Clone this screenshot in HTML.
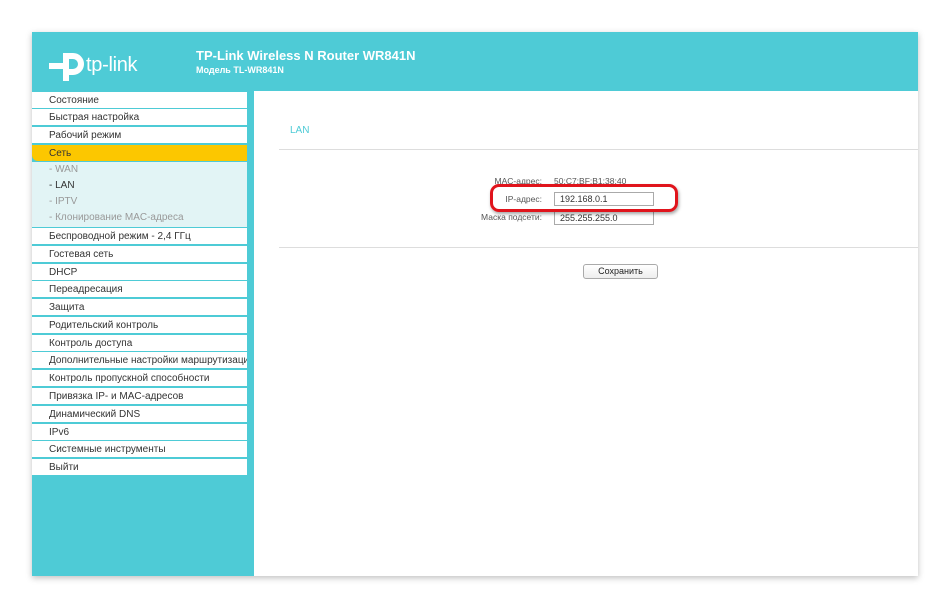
<!DOCTYPE html><html><head><meta charset="utf-8"><style>
*{margin:0;padding:0;box-sizing:border-box}
body{width:950px;height:608px;background:#fff;position:relative;overflow:hidden;font-family:"Liberation Sans",Arial,sans-serif}
#f{position:absolute;left:32px;top:32px;width:886px;height:544px;background:#4ecbd6;box-shadow:0 2px 6px rgba(0,0,0,.25)}
.h1{position:absolute;left:196px;top:48px;color:#fff;font-weight:bold;font-size:13px}
.h2{position:absolute;left:196px;top:65px;color:#fff;font-weight:bold;font-size:9px}
.logo{position:absolute;left:86px;top:54px;color:#fff;font-size:20px;letter-spacing:-0.3px}
.it{position:absolute;left:32px;width:215px;height:16px;background:#fff;font-size:10px;color:#333;padding-left:17px;line-height:18px}
.sub{position:absolute;left:32px;top:162px;width:215px;height:65px;background:#e2f4f5}
.sub div{position:absolute;left:17px;font-size:10px;color:#999}
#m{position:absolute;left:254px;top:91px;width:664px;height:485px;background:#fff}
.lbl{position:absolute;font-size:8.5px;color:#555;text-align:right;width:120px}
.inp{position:absolute;left:554px;width:100px;height:14px;border:1px solid #aaa;font-size:9px;padding-left:5px;line-height:12px;color:#333}
</style></head><body>
<div id="f"></div>
<svg style="position:absolute;left:49px;top:50px" width="36" height="32" viewBox="0 0 36 32"><rect x="0" y="13" width="16" height="6" fill="#fff"/><rect x="14" y="3" width="6" height="28" fill="#fff"/><path d="M17 6h7a8 8 0 0 1 0 16h-4" fill="none" stroke="#fff" stroke-width="6"/></svg>
<div class="logo">tp-link</div>
<div class="h1">TP-Link Wireless N Router WR841N</div>
<div class="h2">Модель TL-WR841N</div>
<div class="it" style="top:92px">Состояние</div>
<div class="it" style="top:109px">Быстрая настройка</div>
<div class="it" style="top:127px">Рабочий режим</div>
<div class="it" style="top:145px;background:#fcc700;border-radius:0 0 0 6px">Сеть</div>
<div class="sub"><div style="top:2px">- WAN</div><div style="top:18px;color:#333">- LAN</div><div style="top:34px">- IPTV</div><div style="top:50px">- Клонирование MAC-адреса</div></div>
<div class="it" style="top:228px">Беспроводной режим - 2,4 ГГц</div>
<div class="it" style="top:246px">Гостевая сеть</div>
<div class="it" style="top:264px">DHCP</div>
<div class="it" style="top:281px">Переадресация</div>
<div class="it" style="top:299px">Защита</div>
<div class="it" style="top:317px">Родительский контроль</div>
<div class="it" style="top:335px">Контроль доступа</div>
<div class="it" style="top:352px;white-space:nowrap;overflow:hidden">Дополнительные настройки маршрутизации</div>
<div class="it" style="top:370px">Контроль пропускной способности</div>
<div class="it" style="top:388px">Привязка IP- и MAC-адресов</div>
<div class="it" style="top:406px">Динамический DNS</div>
<div class="it" style="top:424px">IPv6</div>
<div class="it" style="top:441px">Системные инструменты</div>
<div class="it" style="top:459px">Выйти</div>
<div id="m"></div>
<div style="position:absolute;left:290px;top:125px;color:#4ecbd6;font-size:10px">LAN</div>
<div style="position:absolute;left:279px;top:149px;width:639px;height:1px;background:#ddd"></div>
<div class="lbl" style="left:422px;top:176px">MAC-адрес:</div>
<div style="position:absolute;left:554px;top:176px;font-size:8.5px;color:#555">50:C7:BF:B1:38:40</div>
<div class="lbl" style="left:422px;top:194px">IP-адрес:</div>
<div class="inp" style="top:192px">192.168.0.1</div>
<div class="lbl" style="left:422px;top:212px">Маска подсети:</div>
<div class="inp" style="top:211px">255.255.255.0</div>
<div style="position:absolute;left:490px;top:184px;width:188px;height:28px;border:3px solid #e0141c;border-radius:9px;box-shadow:1px 2px 3px rgba(0,0,0,.35)"></div>
<div style="position:absolute;left:279px;top:247px;width:639px;height:1px;background:#ddd"></div>
<div style="position:absolute;left:583px;top:264px;width:75px;height:15px;border:1px solid #aaa;border-radius:3px;background:linear-gradient(#fff,#eee);font-size:9px;text-align:center;line-height:13px;color:#222">Сохранить</div>
</body></html>
